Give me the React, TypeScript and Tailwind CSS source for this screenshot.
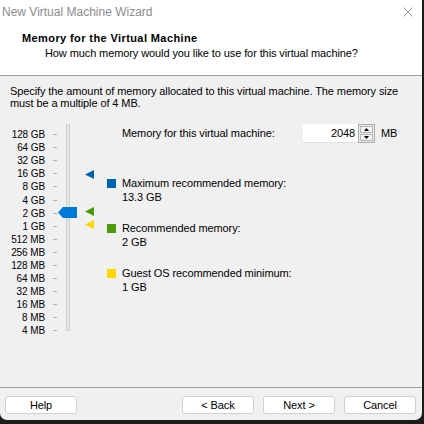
import React from "react";

const scale = ["128 GB", "64 GB", "32 GB", "16 GB", "8 GB", "4 GB", "2 GB", "1 GB", "512 MB", "256 MB", "128 MB", "64 MB", "32 MB", "16 MB", "8 MB", "4 MB"];

function Legend({ color, label, value }: { color: string; label: string; value: string }) {
  return (
    <div className="flex">
      <div className={`w-[9px] h-[9px] mt-[3px] ${color}`} />
      <div className="ml-[6px] leading-[14px]">
        <div>{label}</div>
        <div>{value}</div>
      </div>
    </div>
  );
}

function Button({ children }: { children: React.ReactNode }) {
  return (
    <button className="w-[72px] h-[18px] bg-white border border-[#d0d0d0] rounded-[3px] text-[11px] leading-[16px] text-black">
      {children}
    </button>
  );
}

export default function App() {
  return (
    <div className="w-[424px] h-[424px] bg-[#1c1c1c] overflow-hidden" style={{ fontFamily: '"Liberation Sans", Arial, sans-serif' }}>
      <div className="w-[422px] h-[420px] bg-[#f0f0f0] rounded-b-[7px] overflow-hidden flex flex-col text-[11px] tracking-[-0.1px] text-black">
        {/* title bar */}
        <div className="h-[23px] bg-white flex items-center justify-between pl-[2px] pr-[9px]">
          <span className="text-[12px] tracking-normal text-[#8c8c8c]">New Virtual Machine Wizard</span>
          <svg width="10" height="10" viewBox="0 0 10 10">
            <path d="M0.5 0.5 L9.5 9.5 M9.5 0.5 L0.5 9.5" stroke="#9a9a9a" strokeWidth="1" />
          </svg>
        </div>

        {/* header */}
        <div className="h-[53px] bg-white border-b border-[#a0a0a0] pt-[8px]">
          <div className="pl-[22px] font-bold tracking-[0.4px] leading-[14px]">Memory for the Virtual Machine</div>
          <div className="pl-[45px] leading-[14px] mt-[1px]">How much memory would you like to use for this virtual machine?</div>
        </div>

        {/* body */}
        <div className="flex-1 px-[10px] pt-[9px]">
          <p className="leading-[12px]">
            Specify the amount of memory allocated to this virtual machine. The memory size must be a multiple of 4 MB.
          </p>

          <div className="flex mt-[15px]">
            {/* scale */}
            <div className="relative flex w-[107px] -ml-[10px]">
              <div className="flex flex-col pt-[4px]">
                {scale.map((s) => (
                  <div key={s} className="h-[13.1px] flex items-center">
                    <span className="w-[46px] text-right text-[10px] leading-[13px] pr-[1px]">{s}</span>
                    <span className="ml-[7px] w-[4px] h-px bg-[#b4b4b4]" />
                  </div>
                ))}
              </div>
              <div className="ml-[9px] w-[4px] h-[207px] bg-[#e6e6e6] border border-[#cfcfcf] rounded-[1px]" />

              {/* thumb */}
              <svg className="absolute left-[58px] top-[83px]" width="19" height="11" viewBox="0 0 19 11">
                <path d="M0 5.5 L5 0 H19 V11 H5 Z" fill="#0078d7" />
              </svg>
              {/* markers */}
              <svg className="absolute left-[85px] top-[46px]" width="9" height="9" viewBox="0 0 9 9">
                <path d="M0 4.5 L9 0 V9 Z" fill="#0063b1" />
              </svg>
              <svg className="absolute left-[85px] top-[83px]" width="9" height="9" viewBox="0 0 9 9">
                <path d="M0 4.5 L9 0 V9 Z" fill="#4a9a0f" />
              </svg>
              <svg className="absolute left-[85px] top-[96px]" width="9" height="9" viewBox="0 0 9 9">
                <path d="M0 4.5 L9 0 V9 Z" fill="#ffd800" />
              </svg>
            </div>

            {/* right panel */}
            <div className="flex-1">
              <div className="flex items-center h-[19px] ml-[15px]">
                <span className="w-[181px]">Memory for this virtual machine:</span>
                <div className="w-[55px] h-[19px] bg-white border-b border-[#e0e0e0] text-right pr-[3px] leading-[19px]">2048</div>
                <div className="w-[17px] h-[19px] border border-[#adadad] bg-[#e9e9e9] flex flex-col p-px gap-px">
                  <div className="flex-1 border border-[#b6b6b6] bg-[#f4f4f4] flex items-center justify-center">
                    <svg width="5" height="3" viewBox="0 0 5 3"><path d="M0 3 L2.5 0 L5 3 Z" fill="#000" /></svg>
                  </div>
                  <div className="flex-1 border border-[#b6b6b6] bg-[#f4f4f4] flex items-center justify-center">
                    <svg width="5" height="3" viewBox="0 0 5 3"><path d="M0 0 L5 0 L2.5 3 Z" fill="#000" /></svg>
                  </div>
                </div>
                <span className="ml-[6px]">MB</span>
              </div>

              <div className="mt-[33px] flex flex-col gap-[17px]">
                <Legend color="bg-[#0063b1]" label="Maximum recommended memory:" value="13.3 GB" />
                <Legend color="bg-[#4e9a06]" label="Recommended memory:" value="2 GB" />
                <Legend color="bg-[#ffd800]" label="Guest OS recommended minimum:" value="1 GB" />
              </div>
            </div>
          </div>
        </div>

        {/* footer */}
        <div className="h-[33px] border-t border-[#a0a0a0] flex items-start pt-[8px] px-[5px]">
          <Button>Help</Button>
          <div className="flex-1" />
          <div className="flex gap-[9px] mr-px">
            <Button>&lt; Back</Button>
            <Button>Next &gt;</Button>
            <Button>Cancel</Button>
          </div>
        </div>
      </div>
    </div>
  );
}
